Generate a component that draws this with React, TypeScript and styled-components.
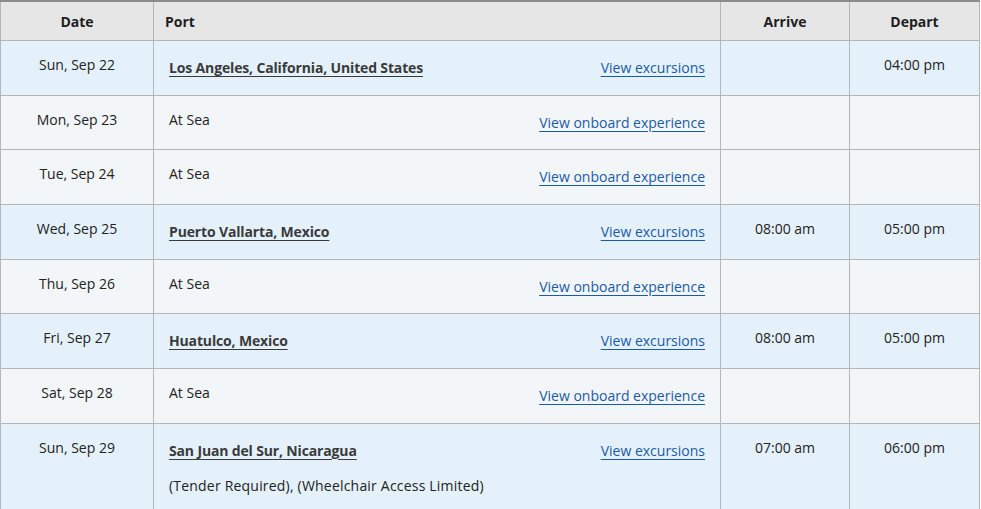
import React from "react";
import styled, { createGlobalStyle } from "styled-components";

type Stop = {
  date: string;
  port: string;
  atSea?: boolean;
  note?: string;
  arrive?: string;
  depart?: string;
};

const stops: Stop[] = [
  { date: "Sun, Sep 22", port: "Los Angeles, California, United States", depart: "04:00 pm" },
  { date: "Mon, Sep 23", port: "At Sea", atSea: true },
  { date: "Tue, Sep 24", port: "At Sea", atSea: true },
  { date: "Wed, Sep 25", port: "Puerto Vallarta, Mexico", arrive: "08:00 am", depart: "05:00 pm" },
  { date: "Thu, Sep 26", port: "At Sea", atSea: true },
  { date: "Fri, Sep 27", port: "Huatulco, Mexico", arrive: "08:00 am", depart: "05:00 pm" },
  { date: "Sat, Sep 28", port: "At Sea", atSea: true },
  {
    date: "Sun, Sep 29",
    port: "San Juan del Sur, Nicaragua",
    note: "(Tender Required), (Wheelchair Access Limited)",
    arrive: "07:00 am",
    depart: "06:00 pm",
  },
];

export default function App() {
  return (
    <>
      <GlobalStyle />
      <Table>
        <colgroup>
          <col style={{ width: 153 }} />
          <col />
          <col style={{ width: 129 }} />
          <col style={{ width: 130 }} />
        </colgroup>
        <thead>
          <tr>
            <Th>Date</Th>
            <Th $align="left">Port</Th>
            <Th>Arrive</Th>
            <Th>Depart</Th>
          </tr>
        </thead>
        <tbody>
          {stops.map((s) => (
            <Row key={s.date} $sea={!!s.atSea}>
              <Td>{s.date}</Td>
              <PortCell>
                <PortLine>
                  {s.atSea ? <SeaText>At Sea</SeaText> : <PortName href="#">{s.port}</PortName>}
                  <ActionLink href="#">
                    {s.atSea ? "View onboard experience" : "View excursions"}
                  </ActionLink>
                </PortLine>
                {s.note && <Note>{s.note}</Note>}
              </PortCell>
              <Td>{s.arrive}</Td>
              <Td>{s.depart}</Td>
            </Row>
          ))}
        </tbody>
      </Table>
    </>
  );
}

const GlobalStyle = createGlobalStyle`
  body {
    margin: 0;
    background: #fff;
    font-family: "Open Sans", "Noto Sans", Arial, sans-serif;
    color: #222;
  }
`;

const Table = styled.table`
  width: 980px;
  border-collapse: collapse;
  table-layout: fixed;
  border-top: 2px solid #8c8c8c;
  font-size: 14px;
`;

const Th = styled.th<{ $align?: string }>`
  height: 38px;
  padding: 0 11px;
  background: #e6e6e6;
  border: 1px solid #b5b5b5;
  border-top: none;
  text-align: ${(p) => p.$align || "center"};
  font-weight: 700;
  font-size: 14px;
  color: #1e1e1e;
`;

const Row = styled.tr<{ $sea: boolean }>`
  background: ${(p) => (p.$sea ? "#f3f6f9" : "#e4f1fb")};
`;

const Td = styled.td`
  height: 39.7px;
  padding: 14px 15px 0;
  vertical-align: top;
  text-align: center;
  border: 1px solid #b5b5b5;
  line-height: 20px;
  color: #222;
`;

const PortCell = styled(Td)`
  text-align: left;
`;

const PortLine = styled.div`
  display: flex;
  justify-content: space-between;
  align-items: flex-start;
`;

const SeaText = styled.span`
  color: #222;
`;

const PortName = styled.a`
  padding-top: 3px;
  font-weight: 700;
  letter-spacing: -0.15px;
  color: #3a3a3a;
  text-decoration: underline;
  text-underline-offset: 3px;
`;

const ActionLink = styled.a`
  padding-top: 3px;
  color: #1a5ba6;
  text-decoration: underline;
  text-underline-offset: 3px;
`;

const Note = styled.div`
  margin-top: 15px;
  margin-bottom: 22px;
  letter-spacing: 0.2px;
  color: #222;
`;
